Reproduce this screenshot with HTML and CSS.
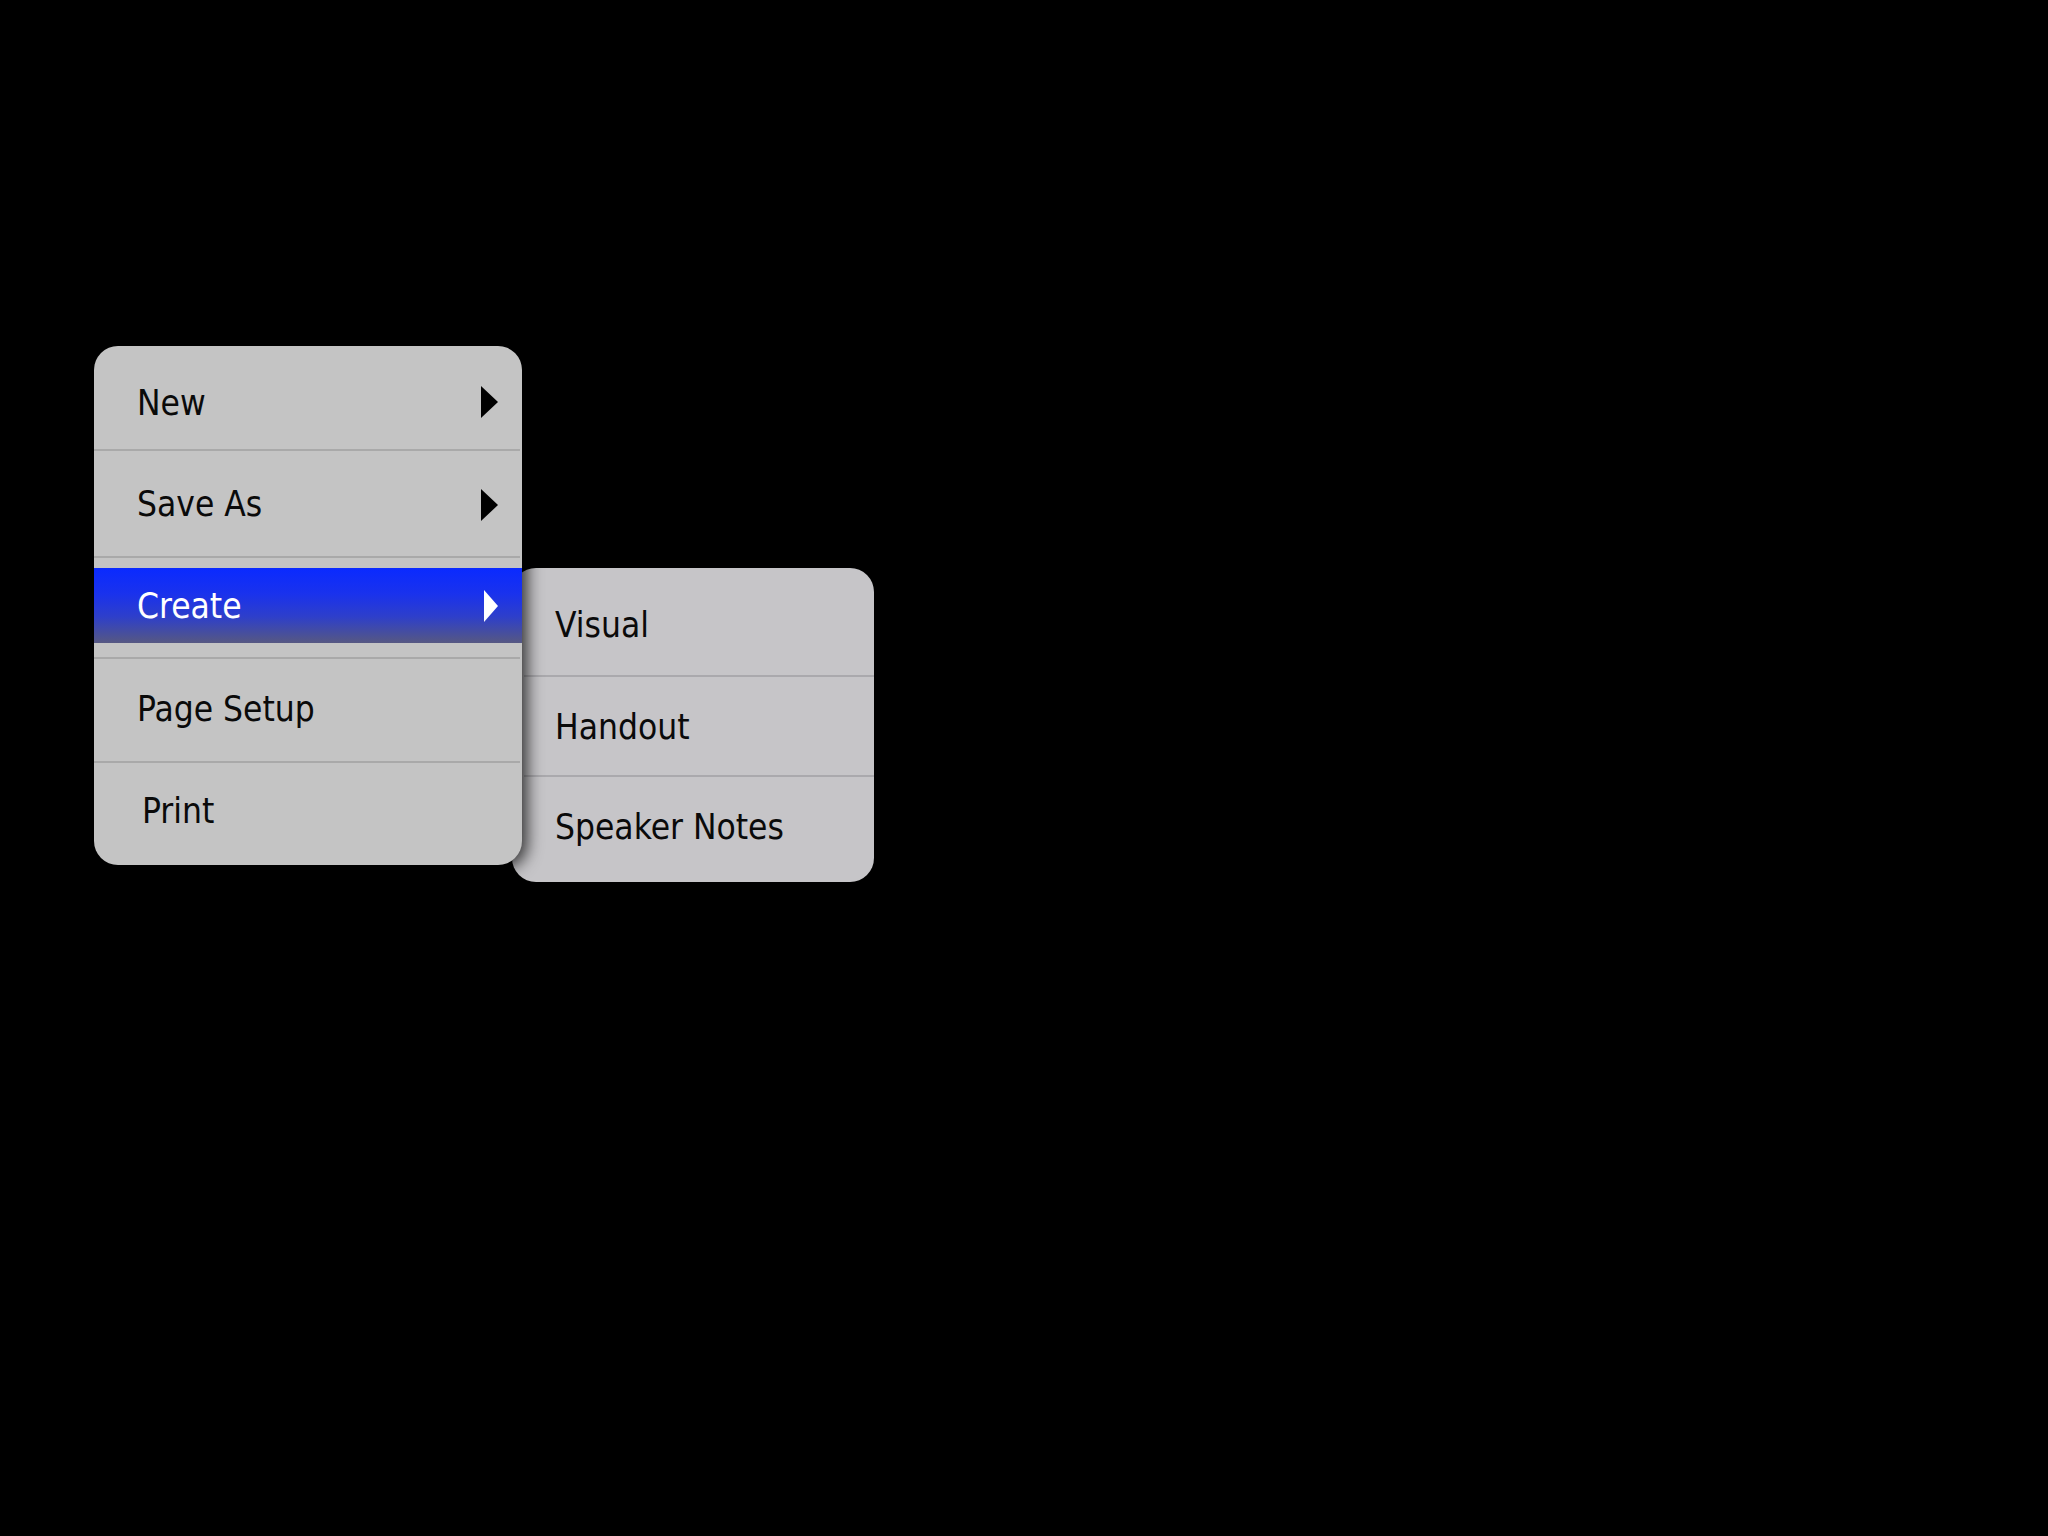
FILE: index.html
```html
<!DOCTYPE html>
<html>
<head>
<meta charset="utf-8">
<link rel="stylesheet" href="styles.css">
</head>
<body>
<div class="stage">
  <div class="menus">
    <div class="menu main">
      <div class="item r1"><span class="label">New</span><span class="arrow"></span></div>
      <div class="sep"></div>
      <div class="item r2"><span class="label">Save As</span><span class="arrow"></span></div>
      <div class="sep"></div>
      <div class="item r3"><div class="hl"><span class="label">Create</span><span class="arrow white"></span></div></div>
      <div class="sep"></div>
      <div class="item r4"><span class="label">Page Setup</span></div>
      <div class="sep"></div>
      <div class="item r5"><span class="label print">Print</span></div>
    </div>
    <div class="menu sub">
      <div class="item s1"><span class="label">Visual</span></div>
      <div class="sep subsep"></div>
      <div class="item s2"><span class="label">Handout</span></div>
      <div class="sep subsep"></div>
      <div class="item s3"><span class="label">Speaker Notes</span></div>
    </div>
  </div>
</div>
</body>
</html>
```

FILE: styles.css
```css
html, body {
  margin: 0;
  padding: 0;
  background: #000;
  width: 2048px;
  height: 1536px;
  overflow: hidden;
}
.stage {
  padding: 346px 0 0 94px;
  font-family: "DejaVu Sans Condensed", "DejaVu Sans", sans-serif;
}
.menus {
  position: relative;
  width: 428px;
}
.menu {
  display: flex;
  flex-direction: column;
  border-radius: 24px;
}
.main {
  position: relative;
  z-index: 2;
  width: 428px;
  height: 519px;
  background: #c4c4c4;
  box-shadow: 5px 3px 16px rgba(0, 0, 0, 0.75);
  overflow: hidden;
}
.sub {
  position: absolute;
  z-index: 1;
  left: 418px;
  top: 222px;
  width: 362px;
  height: 314px;
  background: #c6c5c8;
  overflow: hidden;
}
.item {
  display: flex;
  align-items: center;
  justify-content: space-between;
  padding: 0 24px 0 43px;
  box-sizing: border-box;
  font-size: 35px;
  color: #0a0a0a;
}
.label {
  line-height: 35px;
  align-self: flex-start;
}
.label.print {
  margin-left: 5px;
}
.r1 { height: 103px; }
.r1 .label { margin-top: 40px; }
.r1 .arrow { margin-top: 8px; }
.r2 { height: 105px; }
.r2 .label { margin-top: 36px; }
.r2 .arrow { margin-top: 2px; }
.r3 {
  height: 99px;
  padding: 10px 0 14px 0;
  align-items: stretch;
}
.r4 { height: 102px; }
.r4 .label { margin-top: 33px; }
.r5 { height: 102px; }
.r5 .label { margin-top: 31px; }
.hl {
  flex: 1;
  display: flex;
  align-items: center;
  justify-content: space-between;
  padding: 0 24px 0 43px;
  background: linear-gradient(to bottom, #0a2aff 0%, #1a32ec 35%, #2e3fca 65%, #565882 100%);
  color: #fff;
}
.hl .label { margin-top: 21px; }
.s1 { height: 107px; }
.s1 .label { margin-top: 40px; }
.s2 { height: 98px; }
.s2 .label { margin-top: 33px; }
.s3 { height: 105px; }
.s3 .label { margin-top: 33px; }
.sep {
  height: 2px;
  background: #a9a9a9;
  margin-right: 2px;
}
.subsep {
  margin: 0 0 0 12px;
  background: #aaa9ad;
}
.arrow {
  width: 0;
  height: 0;
  border-top: 16px solid transparent;
  border-bottom: 16px solid transparent;
  border-left: 17px solid #000;
}
.arrow.white {
  border-left-color: #fff;
  border-left-width: 14px;
}
```
